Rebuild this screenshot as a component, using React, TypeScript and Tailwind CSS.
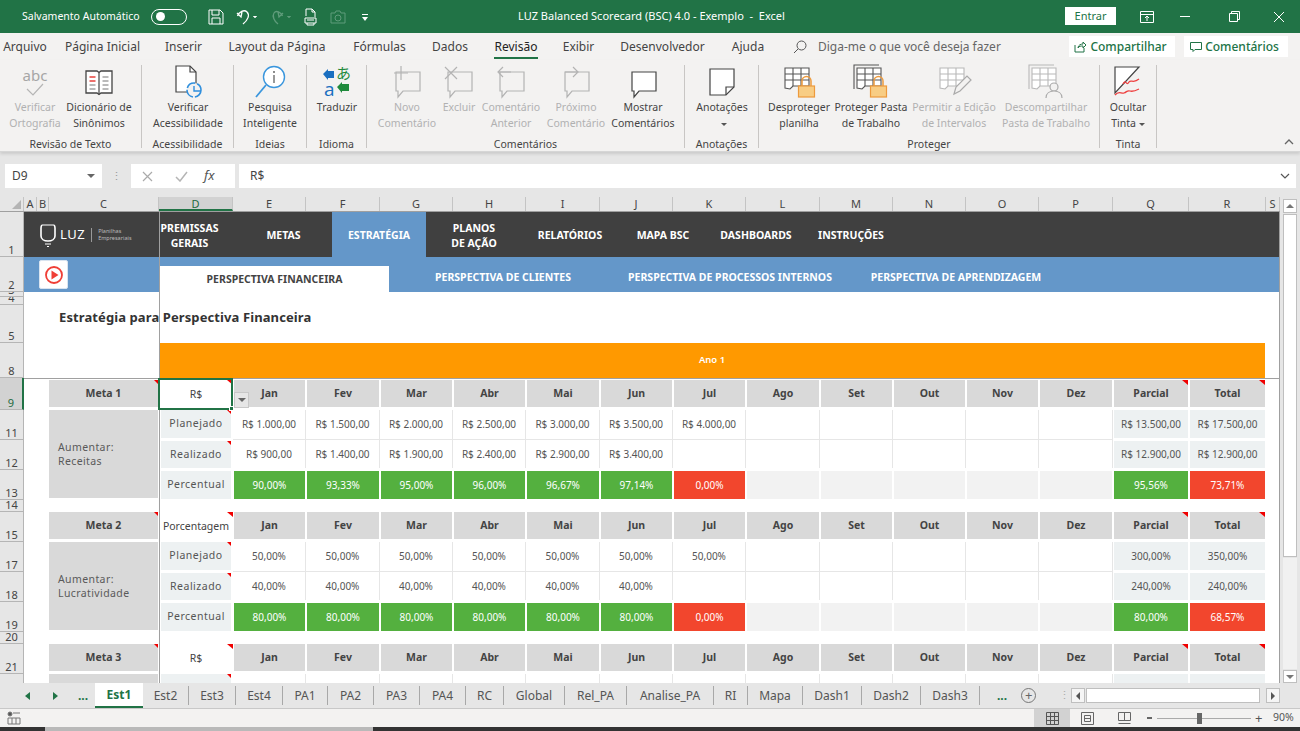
import React from "react";

const GRID = "grid grid-cols-[25px_110px_74px_73px_74px_73px_73px_74px_73px_73px_74px_73px_73px_73px_74px_76px_77px_14px] auto-rows-[30px]";
const MONTHS = ["Jan", "Fev", "Mar", "Abr", "Mai", "Jun", "Jul", "Ago", "Set", "Out", "Nov", "Dez"];

const Tri = ({ big }: { big?: boolean }) => (
  <i className={(big ? "w-[6px] h-[5px]" : "w-[4px] h-[4px]") + " absolute top-0 right-0 bg-[#f00000] [clip-path:polygon(0_0,100%_0,100%_100%)]"} />
);

/* ---------- icons ---------- */
const Sv = ({ w = 32, h = 32, vb = "0 0 32 32", children }: { w?: number; h?: number; vb?: string; children: React.ReactNode }) => (
  <svg width={w} height={h} viewBox={vb} fill="none">{children}</svg>
);
const Abc = () => (
  <div className="flex flex-col items-center text-[#a6a6a6]">
    <span className="text-[15px] leading-[15px]">abc</span>
    <svg width="20" height="14" viewBox="0 0 20 14" fill="none"><path d="M2 6l6 6L18 1" stroke="#b5b5b5" strokeWidth="1.2" /></svg>
  </div>
);
const Book = () => (
  <Sv>
    <path d="M3 5h11l2 1.500L18 5h11v22H18l-2 1.500L14 27H3z" fill="#fff" stroke="#444" strokeWidth="1.3" />
    <path d="M16 6.500v22" stroke="#444" strokeWidth="1.200" />
    <path d="M6.500 11h6M6.500 15h6" stroke="#e8413c" strokeWidth="1.300" />
    <path d="M6.500 19h6M6.500 23h6M19.500 11h6M19.500 15h6M19.500 19h6M19.500 23h6" stroke="#777" strokeWidth="1.100" />
  </Sv>
);
const Access = () => (
  <Sv w={34} h={36} vb="0 0 34 36">
    <path d="M5 2h14l6 6v20H5z" fill="#fff" stroke="#444" strokeWidth="1.200" />
    <path d="M19 2v6h6" stroke="#444" strokeWidth="1.200" />
    <circle cx="23" cy="26" r="7" fill="#f3f2f1" stroke="#2f8fdd" strokeWidth="1.600" strokeDasharray="10 2" />
    <path d="M23 22v5h7" stroke="#2f8fdd" strokeWidth="1.400" />
  </Sv>
);
const Smart = () => (
  <Sv w={34} h={36} vb="0 0 34 36">
    <circle cx="21" cy="13" r="10.500" fill="#fff" stroke="#3a96dd" strokeWidth="1.400" />
    <path d="M13 21L3 33" stroke="#3a96dd" strokeWidth="1.800" />
    <path d="M21 11v8" stroke="#555" strokeWidth="1.200" />
    <circle cx="21" cy="8" r=".9" fill="#555" />
  </Sv>
);
const Translate = () => (
  <Sv w={30} h={34} vb="0 0 30 34">
    <path d="M1 9l5-5v2h6v7H6v2z" fill="#1a6fc0" />
    <path d="M28 23l-5 5v-2h-7v-7h7v-2z" fill="#1f8a3c" transform="rotate(180 21.500 22.500)" />
    <text x="14" y="14" fontSize="15" fill="#1f8a3c" fontFamily="'Noto Sans CJK JP',sans-serif">あ</text>
    <text x="2" y="31" fontSize="19" fill="#1a6fc0" fontFamily="'Open Sans',sans-serif">a</text>
    <path d="M3 33h10" stroke="#1a6fc0" strokeWidth="0" />
  </Sv>
);
const Bubble = ({ kind }: { kind: string }) => {
  const c = kind === "show" ? "#444" : "#b3b3b3";
  return (
    <Sv w={32} h={34} vb="0 0 32 34">
      <path d="M5 7h24v19H12l-5 6v-6H5z" fill={kind === "show" ? "#fff" : "#f3f2f1"} stroke={c} strokeWidth="1.200" />
      {kind === "new" && <path d="M10 1v14M3 8h14" stroke={c} strokeWidth="1.200" />}
      {kind === "del" && <path d="M2 2l12 12M14 2L2 14" stroke={c} strokeWidth="1.200" />}
      {kind === "prev" && <path d="M16 7H4m4-5L3 7l5 5" stroke={c} strokeWidth="1.200" />}
      {kind === "next" && <path d="M5 7h12m-4-5 5 5-5 5" stroke={c} strokeWidth="1.200" />}
    </Sv>
  );
};
const Note = () => (
  <Sv>
    <path d="M4 3h24v18l-8 8H4z" fill="#fff" stroke="#444" strokeWidth="1.200" />
    <path d="M28 21h-8v8" stroke="#444" strokeWidth="1.200" />
  </Sv>
);
const Sheet = ({ c, stack }: { c: string; stack?: boolean }) => (
  <g stroke={c} strokeWidth="1.100" fill="none">
    {stack && <path d="M1 25V1h25" />}
    <path d="M4 4h24v18H12l-3 3-5-1z" fill="#fff" />
    <path d="M4 10h24M4 16h24M12 4v18M20 4v18" />
  </g>
);
const Lock = () => (
  <g>
    <path d="M21 22v-5a4.500 4.500 0 0 1 9 0v5" stroke="#ed9a3c" strokeWidth="1.500" fill="none" />
    <rect x="17.500" y="22" width="16" height="11" fill="#f8cd84" stroke="#ed9a3c" strokeWidth="1.200" />
  </g>
);
const Unprotect = () => (<Sv w={36} h={36} vb="0 0 36 36"><Sheet c="#555" /><Lock /></Sv>);
const Protect = () => (<Sv w={36} h={36} vb="0 0 36 36"><Sheet c="#555" stack /><Lock /></Sv>);
const Permit = () => (
  <Sv w={36} h={36} vb="0 0 36 36">
    <Sheet c="#b8b8b8" />
    <path d="M18 30l2-7 11-11 4 4-11 11z" fill="#f3f2f1" stroke="#aaa" strokeWidth="1.200" />
  </Sv>
);
const Unshare = () => (
  <Sv w={36} h={36} vb="0 0 36 36">
    <Sheet c="#b8b8b8" stack />
    <circle cx="26" cy="23" r="4" fill="#f3f2f1" stroke="#aaa" strokeWidth="1.200" />
    <path d="M18 34c0-5 4-7 8-7s8 2 8 7" fill="#f3f2f1" stroke="#aaa" strokeWidth="1.200" />
  </Sv>
);
const Ink = () => (
  <Sv w={32} h={34} vb="0 0 32 34">
    <path d="M3 2h24L3 28z" fill="#fff" stroke="#444" strokeWidth="1.200" />
    <path d="M11 19c3-6 3 3 6-2 2-3 4 2 10-3" stroke="#ee4040" strokeWidth="1.300" />
    <path d="M3 30c4-5 6-1 9-2s3-3 6-2 5 0 9-2" stroke="#ee4040" strokeWidth="1.300" />
  </Sv>
);

/* ---------- ribbon ---------- */
type Btn = { i: React.ReactNode; t: string[]; w: string; off?: boolean };
type Group = { label: string; w: string; pl: string; btns: Btn[] };
const GROUPS: Group[] = [
  { label: "Revisão de Texto", w: "w-[142px]", pl: "pl-[6px]", btns: [
    { i: <Abc />, t: ["Verificar", "Ortografia"], w: "w-[58px]", off: true },
    { i: <Book />, t: ["Dicionário de", "Sinônimos"], w: "w-[70px]" },
  ] },
  { label: "Acessibilidade", w: "w-[92px]", pl: "pl-[8px]", btns: [{ i: <Access />, t: ["Verificar", "Acessibilidade"], w: "w-[76px]" }] },
  { label: "Ideias", w: "w-[73px]", pl: "pl-[7px]", btns: [{ i: <Smart />, t: ["Pesquisa", "Inteligente"], w: "w-[58px]" }] },
  { label: "Idioma", w: "w-[60px]", pl: "pl-[7px]", btns: [{ i: <Translate />, t: ["Traduzir"], w: "w-[46px]" }] },
  { label: "Comentários", w: "w-[318px]", pl: "pl-[7px]", btns: [
    { i: <Bubble kind="new" />, t: ["Novo", "Comentário"], w: "w-[66px]", off: true },
    { i: <Bubble kind="del" />, t: ["Excluir"], w: "w-[38px]", off: true },
    { i: <Bubble kind="prev" />, t: ["Comentário", "Anterior"], w: "w-[66px]", off: true },
    { i: <Bubble kind="next" />, t: ["Próximo", "Comentário"], w: "w-[64px]", off: true },
    { i: <Bubble kind="show" />, t: ["Mostrar", "Comentários"], w: "w-[70px]" },
  ] },
  { label: "Anotações", w: "w-[74px]", pl: "pl-[7px]", btns: [{ i: <Note />, t: ["Anotações", "▾"], w: "w-[60px]" }] },
  { label: "Proteger", w: "w-[341px]", pl: "pl-[6px]", btns: [
    { i: <Unprotect />, t: ["Desproteger", "planilha"], w: "w-[68px]" },
    { i: <Protect />, t: ["Proteger Pasta", "de Trabalho"], w: "w-[76px]" },
    { i: <Permit />, t: ["Permitir a Edição", "de Intervalos"], w: "w-[90px]", off: true },
    { i: <Unshare />, t: ["Descompartilhar", "Pasta de Trabalho"], w: "w-[94px]", off: true },
  ] },
  { label: "Tinta", w: "w-[57px]", pl: "pl-[4px]", btns: [{ i: <Ink />, t: ["Ocultar", "Tinta ▾"], w: "w-[48px]" }] },
];
const TABS: [string, string][] = [
  ["Arquivo", "w-[50px]"], ["Página Inicial", "w-[105px]"], ["Inserir", "w-[57px]"], ["Layout da Página", "w-[130px]"],
  ["Fórmulas", "w-[75px]"], ["Dados", "w-[66px]"], ["Revisão", "w-[66px]"], ["Exibir", "w-[59px]"],
  ["Desenvolvedor", "w-[109px]"], ["Ajuda", "w-[62px]"],
];

const TitleBar = () => (
  <div className="h-[33px] bg-[#217346] text-white flex items-center text-[10.500px] relative">
    <span className="ml-[22px] w-[129px] whitespace-nowrap">Salvamento Automático</span>
    <div className="w-[36px] h-[16px] rounded-full border border-white flex items-center pl-[4px]"><i className="w-[9px] h-[9px] rounded-full bg-white" /></div>
    <div className="ml-[21px] w-[16px] h-[16px]">
      <svg width="16" height="16" viewBox="0 0 16 16" fill="none" stroke="#fff" strokeWidth="1"><path d="M1 1h11l3 3v11H1z" /><path d="M4 1v5h7V1M4 15v-6h8v6" /></svg>
    </div>
    <svg className="ml-[12px]" width="22" height="16" viewBox="0 0 22 16" fill="none" stroke="#fff" strokeWidth="1.300"><path d="M1 4l4 4 1-5M1.500 7C3 3 8 0 11 3c3 3 1 8-4 12" /><path d="M17 7l2 2 2-2" fill="#fff" strokeWidth=".5" /></svg>
    <svg className="ml-[12px]" width="22" height="16" viewBox="0 0 22 16" fill="none" stroke="#5f9c7b" strokeWidth="1.300"><path d="M11 4L7 8 6 3M10.500 7C9 3 4 1 2 4c-2 3 0 8 4 11" transform="translate(2 0)" /><path d="M17 7l2 2 2-2" fill="#5f9c7b" strokeWidth=".5" /></svg>
    <svg className="ml-[10px]" width="18" height="18" viewBox="0 0 18 18" fill="none" stroke="#fff" strokeWidth="1"><path d="M4 8V1h6l3 3v5M10 1v3h3M3 10h11v5H3zM5 15v2h7v-2M5 12h7" /></svg>
    <svg className="ml-[10px]" width="16" height="16" viewBox="0 0 16 16" fill="none" stroke="#5f9c7b" strokeWidth="1"><path d="M1 4h4l1-2h4l1 2h4v10H1z" /><circle cx="8" cy="9" r="3" /></svg>
    <svg className="ml-[14px]" width="10" height="10" viewBox="0 0 10 10"><path d="M2 2h6v1H2zM2 5h6L5 9z" fill="#fff" /></svg>
    <span className="absolute left-[518px] whitespace-pre text-[11px]">LUZ Balanced Scorecard (BSC) 4.0 - Exemplo  -  Excel</span>
    <div className="absolute left-[1065px] top-[7px] w-[51px] h-[18px] bg-white text-[#217346] flex items-center justify-center text-[11px]">Entrar</div>
    <svg className="absolute left-[1140px]" width="14" height="12" viewBox="0 0 14 12" fill="none" stroke="#fff"><path d="M.500 .500h13v11H.500zM.500 3.500h13M7 10V5M5 7l2-2 2 2" /></svg>
    <i className="absolute left-[1180px] w-[10px] h-px bg-white" />
    <svg className="absolute left-[1229px]" width="11" height="11" viewBox="0 0 11 11" fill="none" stroke="#fff"><path d="M.500 2.500h8v8h-8zM2.500 2.500v-2h8v8h-2" /></svg>
    <svg className="absolute left-[1274px]" width="10" height="10" viewBox="0 0 10 10" stroke="#fff"><path d="M0 0l10 10M10 0L0 10" /></svg>
  </div>
);

const TabRow = () => (
  <div className="h-[27px] bg-[#f3f2f1] flex items-center text-[12px] text-[#444] relative pt-[1px]">
    {TABS.map(([t, w]) => (
      <div key={t} className={w + " text-center relative h-full flex items-center justify-center"}>
        {t === "Revisão" ? <span className="text-[#222]">{t}</span> : t}
        {t === "Revisão" && <i className="absolute left-[11px] right-[11px] bottom-[1px] h-[2px] bg-[#217346]" />}
      </div>
    ))}
    <svg className="ml-[14px]" width="14" height="14" viewBox="0 0 14 14" fill="none" stroke="#555"><circle cx="8.500" cy="5.500" r="4.500" /><path d="M5 9l-4 4" /></svg>
    <span className="ml-[11px] text-[#666]">Diga-me o que você deseja fazer</span>
    <div className="absolute left-[1069px] top-[3px] w-[106px] h-[21px] bg-white flex items-center justify-center gap-[3px] text-[#217346] font-medium pr-[3px]">
      <svg width="13" height="13" viewBox="0 0 13 13" fill="none" stroke="#217346"><path d="M1 5v7h9V8M4 8c0-3 3-4 5-4V2l3 3-3 3V6C7 6 5 6 4 8z" /></svg>
      Compartilhar
    </div>
    <div className="absolute left-[1184px] top-[3px] w-[104px] h-[21px] bg-white flex items-center justify-center gap-[3px] text-[#217346] font-medium pr-[3px]">
      <svg width="12" height="12" viewBox="0 0 12 12" fill="none" stroke="#217346"><path d="M.500 1.500h11v7H5l-2 2v-2H.500z" /></svg>
      Comentários
    </div>
  </div>
);

const Caret = () => <i className="inline-block align-middle ml-[3px] w-0 h-0 border-x-[3px] border-x-transparent border-t-[3px] border-t-[#555]" />;

const Ribbon = () => (
  <div className="h-[92px] bg-[#f3f2f1] flex pt-[5px] text-[10.500px] leading-[16px] text-[#444] relative border-b border-[#d6d6d6] shadow-[0_2px_3px_rgba(0,0,0,0.12)]">
    {GROUPS.map((g) => (
      <div key={g.label} className={g.w + " h-[83px] flex flex-col border-r border-[#c8c6c4]"}>
        <div className={g.pl + " h-[72px] flex"}>
          {g.btns.map((b) => (
            <div key={b.t[0]} className={b.w + " flex flex-col items-center shrink-0 whitespace-nowrap " + (b.off ? "text-[#b1b1b1]" : "")}>
              <div className="h-[34px] flex items-center justify-center">{b.i}</div>
              {b.t.map((l) => (
                <span key={l}>{l.replace("▾", "").trim()}{l.includes("▾") && <Caret />}</span>
              ))}
            </div>
          ))}
        </div>
        <div className="text-center leading-[14px] h-[11px]">{g.label}</div>
      </div>
    ))}
    <svg className="absolute right-[6px] bottom-[6px]" width="10" height="7" viewBox="0 0 10 7" fill="none" stroke="#666" strokeWidth="1.300"><path d="M1 6l4-4 4 4" /></svg>
  </div>
);

const FormulaBar = () => (
  <div className="h-[45px] bg-[#e6e6e6] flex pt-[12px] text-[12px] text-[#444]">
    <div className="ml-[5px] w-[97px] h-[24px] bg-white flex items-center justify-between px-[7px]">
      D9 <i className="w-0 h-0 border-x-[4px] border-x-transparent border-t-[4px] border-t-[#666]" />
    </div>
    <div className="w-[29px] h-[24px] flex items-center justify-center text-[#999] text-[11px]">⋮</div>
    <div className="w-[104px] h-[24px] bg-white flex items-center">
      <svg className="ml-[11px]" width="11" height="11" viewBox="0 0 11 11" stroke="#aaa" strokeWidth="1.200"><path d="M1 1l9 9M10 1L1 10" /></svg>
      <svg className="ml-[22px]" width="13" height="11" viewBox="0 0 13 11" fill="none" stroke="#b5b5b5" strokeWidth="1.500"><path d="M1 6l4 4 7-9" /></svg>
      <span className="ml-[16px] italic text-[#555] font-['Liberation_Serif',serif] text-[13px]">fx</span>
    </div>
    <div className="ml-[4px] w-[1057px] h-[24px] bg-white flex items-center justify-between pl-[11px] pr-[6px]">
      R$
      <svg width="10" height="6" viewBox="0 0 10 6" fill="none" stroke="#555" strokeWidth="1.200"><path d="M1 1l4 4 4-4" /></svg>
    </div>
  </div>
);

/* ---------- sheet ---------- */
const COLS = ["A", "B", "C", "D", "E", "F", "G", "H", "I", "J", "K", "L", "M", "N", "O", "P", "Q", "R", "S"];
const ColHeader = () => (
  <div className="flex h-[15px] bg-[#e6e6e6] border-b border-[#9f9f9f]">
    <div className="w-[24px] relative border-r border-[#c4c4c4]">
      <i className="absolute right-[2px] bottom-[2px] w-[9px] h-[9px] bg-[#b4b4b4] [clip-path:polygon(100%_0,100%_100%,0_100%)]" />
    </div>
    <div className="flex-1 grid grid-cols-[13px_12px_110px_74px_73px_74px_73px_73px_74px_73px_73px_74px_73px_73px_73px_74px_76px_77px_14px] text-[11px] text-[#444] leading-[14px]">
      {COLS.map((c) => (
        <div key={c} className={"text-center overflow-hidden border-r border-[#c4c4c4] " + (c === "D" ? "bg-[#d2d2d2] text-[#1f6b3f] border-b-2 border-b-[#217346]" : "")}>{c}</div>
      ))}
    </div>
  </div>
);

const ROWS: [string, string, boolean?][] = [
  ["1", "h-[45px]"], ["2", "h-[35px]"], ["3", "h-[5px]"], ["4", "h-[8px]"], ["5", "h-[38px]"], ["8", "h-[35px]"],
  ["9", "h-[32px]", true], ["11", "h-[30px]"], ["12", "h-[30px]"], ["13", "h-[30px]"], ["14", "h-[12px]"], ["15", "h-[30px]"],
  ["17", "h-[30px]"], ["18", "h-[30px]"], ["19", "h-[30px]"], ["20", "h-[12px]"], ["21", "h-[30px]"], ["22", "h-[30px]"],
];
const RowHeader = () => (
  <div className="w-[24px] shrink-0 text-[11px] text-[#444] bg-[#e6e6e6]">
    {ROWS.map(([n, h, sel]) => (
      <div key={n} className={h + " overflow-hidden flex items-end justify-center leading-[13px] border-b border-[#b5b5b5] border-r " + (sel ? "bg-[#d2d2d2] text-[#1f6b3f] border-r-2 border-r-[#217346]" : "border-r-[#b5b5b5]")}>{n}</div>
    ))}
  </div>
);

const Head = ({ t, tri }: { t: string; tri?: boolean }) => (
  <div className="relative mx-[1px] mb-[3px] bg-[#d9d9d9] flex items-center justify-center font-bold text-[#444] text-[10.500px]">
    {t}{tri && <Tri big />}
  </div>
);
const Label = ({ t, cls }: { t: string; cls: string }) => (
  <div className={"relative col-start-3 ml-[2px] mr-[2px] bg-[#edf1f2] flex items-center justify-center text-[#555] text-[10.500px] tracking-[0.5px] " + cls}>
    {t}{cls.includes("mb-[2px]") && <Tri />}
  </div>
);

type BlockData = { meta: string; unit: string; goal: string[]; plan: string[]; real: string[]; pct: string[]; planT: string[]; realT: string[]; pctT: string[]; cls?: string };

const Block = ({ d }: { d: BlockData }) => (
  <div className={GRID + " " + (d.cls || "")}>
    <div />
    <div className="relative mr-[1px] mb-[3px] bg-[#d9d9d9] flex items-center justify-center font-bold text-[#444] text-[10.500px]">{d.meta}<Tri /></div>
    <div className="relative flex items-center justify-center bg-white text-[#444] text-[10.500px]">{d.unit}<Tri big /></div>
    {MONTHS.map((m) => <Head key={m} t={m} />)}
    <Head t="Parcial" tri /><Head t="Total" tri />
    <div />

    {/* goal */}
    <div className="col-start-2 row-start-2 row-span-3 mr-[1px] mb-[2px] bg-[#d9d9d9] flex items-center pl-[9px] text-[#595959] text-[10.500px] leading-[14px] tracking-[0.4px]">
      <div>{d.goal.map((g) => <div key={g}>{g}</div>)}</div>
    </div>

    {/* planned */}
    <div className="col-start-1 row-start-2" />
    <Label t="Planejado" cls="row-start-2 mb-[2px]" />
    {MONTHS.map((m, i) => (
      <div key={m} className="row-start-2 border-r border-b border-[#e6e6e6] flex items-center justify-center text-[#555] text-[10px]">{d.plan[i] || ""}</div>
    ))}
    {d.planT.map((v, i) => <div key={i} className="row-start-2 mx-[1px] mb-[2px] bg-[#edf1f2] flex items-center justify-center text-[#555] text-[10px]">{v}</div>)}

    {/* done */}
    <div className="col-start-1 row-start-3" />
    <Label t="Realizado" cls="row-start-3 mt-[1px] mb-[2px]" />
    {MONTHS.map((m, i) => (
      <div key={m} className="row-start-3 mb-[2px] border-r border-[#e6e6e6] flex items-center justify-center text-[#555] text-[10px]">{d.real[i] || ""}</div>
    ))}
    {d.realT.map((v, i) => <div key={i} className="row-start-3 mx-[1px] mt-[1px] mb-[2px] bg-[#edf1f2] flex items-center justify-center text-[#555] text-[10px]">{v}</div>)}

    {/* percent */}
    <div className="col-start-1 row-start-4" />
    <Label t="Percentual" cls="row-start-4 my-[1px]" />
    {MONTHS.map((m, i) => {
      const v = d.pct[i];
      const bg = !v ? "bg-[#f2f2f2]" : v === "0,00%" ? "bg-[#f2462d]" : "bg-[#54b03f]";
      return <div key={m} className={"row-start-4 mx-[1px] my-[1px] flex items-center justify-center text-white text-[10px] " + bg}>{v || ""}</div>;
    })}
    {d.pctT.map((v, i) => (
      <div key={i} className={"row-start-4 mx-[1px] my-[1px] flex items-center justify-center text-white text-[10px] " + (i === 0 ? "bg-[#54b03f]" : "bg-[#f2462d]")}>{v}</div>
    ))}
  </div>
);

const B1: BlockData = {
  meta: "Meta 1", unit: "R$", goal: ["Aumentar:", "Receitas"], cls: "pt-[2px]",
  plan: ["R$ 1.000,00", "R$ 1.500,00", "R$ 2.000,00", "R$ 2.500,00", "R$ 3.000,00", "R$ 3.500,00", "R$ 4.000,00"],
  real: ["R$ 900,00", "R$ 1.400,00", "R$ 1.900,00", "R$ 2.400,00", "R$ 2.900,00", "R$ 3.400,00"],
  pct: ["90,00%", "93,33%", "95,00%", "96,00%", "96,67%", "97,14%", "0,00%"],
  planT: ["R$ 13.500,00", "R$ 17.500,00"], realT: ["R$ 12.900,00", "R$ 12.900,00"], pctT: ["95,56%", "73,71%"],
};
const B2: BlockData = {
  meta: "Meta 2", unit: "Porcentagem", goal: ["Aumentar:", "Lucratividade"], cls: "mt-[12px]",
  plan: ["50,00%", "50,00%", "50,00%", "50,00%", "50,00%", "50,00%", "50,00%"],
  real: ["40,00%", "40,00%", "40,00%", "40,00%", "40,00%", "40,00%"],
  pct: ["80,00%", "80,00%", "80,00%", "80,00%", "80,00%", "80,00%", "0,00%"],
  planT: ["300,00%", "350,00%"], realT: ["240,00%", "240,00%"], pctT: ["80,00%", "68,57%"],
};
const B3: BlockData = {
  meta: "Meta 3", unit: "R$", goal: [""], cls: "mt-[12px]",
  plan: [], real: [], pct: [], planT: ["", ""], realT: ["", ""], pctT: ["", ""],
};

const NAV: [string[], string][] = [
  [["PREMISSAS", "GERAIS"], "w-[61px]"], [["METAS"], "w-[112px] pl-[15px]"], [["ESTRATÉGIA"], "w-[94px] bg-[#6497c9]"],
  [["PLANOS", "DE AÇÃO"], "w-[96px]"], [["RELATÓRIOS"], "w-[96px]"], [["MAPA BSC"], "w-[90px]"], [["DASHBOARDS"], "w-[96px]"], [["INSTRUÇÕES"], "w-[94px]"],
];
const SUB: [string, string][] = [["PERSPECTIVA DE CLIENTES", "w-[228px]"], ["PERSPECTIVA DE PROCESSOS INTERNOS", "w-[226px]"], ["PERSPECTIVA DE APRENDIZAGEM", "w-[226px]"]];

const SheetBody = () => (
  <div className="flex-1 min-w-0 bg-white">
    <div className="h-[45px] bg-[#404040] flex text-white font-bold text-[10.500px] leading-[15px]">
      <div className="w-[135px] flex items-center pl-[15px] gap-[3px]">
        <svg width="18" height="26" viewBox="0 0 18 26" fill="none" stroke="#fff" strokeWidth="1.600">
          <path d="M3 3c-1 1-1 2-1 3v8c0 3 3 5 7 5s7-2 7-5V6c0-1 0-2-1-3" />
          <path d="M3 3h12M6 22h6M8 24.500h2" strokeWidth="1.200" />
        </svg>
        <span className="text-[13px] font-normal tracking-[0.5px]">LUZ</span>
        <i className="w-px h-[14px] bg-[#999] mx-[3px]" />
        <span className="text-[5.500px] leading-[7px] font-normal text-[#bbb]">Planilhas<br />Empresariais</span>
      </div>
      {NAV.map(([t, w]) => (
        <div key={t[0]} className={w + " shrink-0 flex flex-col items-center justify-center text-center whitespace-nowrap pt-[2px]"}>
          {t.map((l) => <span key={l}>{l}</span>)}
        </div>
      ))}
    </div>
    <div className="h-[35px] bg-[#6497c9] flex text-white font-bold text-[10.500px]">
      <div className="w-[136px] pl-[15px] pt-[3px]">
        <div className="w-[29px] h-[29px] bg-white rounded-[2px] border border-[#d9e4f0] flex items-center justify-center">
          <svg width="20" height="20" viewBox="0 0 20 20" fill="none"><circle cx="10" cy="10" r="8" stroke="#ef3e36" strokeWidth="1.800" /><path d="M7.500 5.500l7 4.500-7 4.500z" fill="#ef3e36" /></svg>
        </div>
      </div>
      <div className="self-end h-[26px] w-[229px] bg-white text-[#444] flex items-center justify-center pt-[2px]">PERSPECTIVA FINANCEIRA</div>
      {SUB.map(([t, w]) => <div key={t} className={w + " self-end h-[26px] flex items-center justify-center pb-[2px]"}>{t}</div>)}
    </div>
    <div className="h-[51px] flex items-center pl-[35px] font-bold text-[13px] text-[#333] tracking-[0.1px]">Estratégia para Perspectiva Financeira</div>
    <div className="h-[35px] pl-[135px] pr-[14px]">
      <div className="h-full bg-[#ff9900] text-white font-semibold text-[9.500px] flex items-center justify-center">Ano 1</div>
    </div>
    <Block d={B1} />
    <Block d={B2} />
    <Block d={B3} />
  </div>
);

const VScroll = () => (
  <div className="w-[20px] shrink-0 bg-[#e6e6e6] pl-[3px] pr-[3px] pt-[2px] flex flex-col gap-[1px] relative">
    <div className="h-[14px] bg-white border border-[#bfbfbf] flex items-center justify-center"><i className="w-0 h-0 border-x-[4px] border-x-transparent border-b-[4px] border-b-[#777]" /></div>
    <div className="h-[344px] bg-white border border-[#bfbfbf]" />
    <div className="h-[111px] bg-[#f1f1f1]" />
    <div className="h-[13px] bg-white border border-[#bfbfbf] flex items-center justify-center"><i className="w-0 h-0 border-x-[4px] border-x-transparent border-t-[4px] border-t-[#777]" /></div>
  </div>
);

const Sheet_ = () => (
  <div className="relative h-[486px] flex overflow-hidden bg-[#e6e6e6]">
    <div className="flex-1 min-w-0">
      <ColHeader />
      <div className="flex h-[471px] overflow-hidden border-r border-[#9f9f9f]">
        <RowHeader />
        <SheetBody />
      </div>
    </div>
    <VScroll />
    {/* frozen-pane lines */}
    <i className="absolute left-[159px] top-[15px] bottom-0 w-px bg-[#a0a0a0]" />
    <i className="absolute left-[24px] right-[20px] top-[181px] h-px bg-[#a0a0a0]" />
    {/* selected cell */}
    <div className="absolute left-[158px] top-[181px] w-[75px] h-[32px] border-2 border-[#217346]" >
      <i className="absolute -right-[3px] -bottom-[3px] w-[5px] h-[5px] bg-[#217346] border border-white" />
    </div>
    <div className="absolute left-[234px] top-[195px] w-[15px] h-[16px] bg-[#e6e6e6] border border-[#c8c8c8] flex items-center justify-center">
      <i className="w-0 h-0 border-x-[4px] border-x-transparent border-t-[4px] border-t-[#666]" />
    </div>
  </div>
);

const SHEETS: [string, string][] = [
  ["Est2", "w-[46px]"], ["Est3", "w-[47px]"], ["Est4", "w-[47px]"], ["PA1", "w-[45px]"], ["PA2", "w-[46px]"], ["PA3", "w-[46px]"], ["PA4", "w-[46px]"],
  ["RC", "w-[38px]"], ["Global", "w-[61px]"], ["Rel_PA", "w-[62px]"], ["Analise_PA", "w-[87px]"], ["RI", "w-[34px]"], ["Mapa", "w-[55px]"],
  ["Dash1", "w-[59px]"], ["Dash2", "w-[59px]"], ["Dash3", "w-[59px]"],
];
const SheetTabs = () => (
  <div className="h-[26px] bg-[#e6e6e6] flex items-center text-[12px] text-[#555] border-b border-[#c8c8c8] relative">
    <div className="w-[95px] flex items-center text-[#217346] font-bold shrink-0 h-full">
      <i className="ml-[25px] w-0 h-0 border-y-[4px] border-y-transparent border-r-[5px] border-r-[#217346]" />
      <i className="ml-[23px] w-0 h-0 border-y-[4px] border-y-transparent border-l-[5px] border-l-[#217346]" />
      <span className="ml-[20px]">...</span>
    </div>
    <div className="w-[48px] h-[25px] bg-white border-b-2 border-[#217346] text-[#217346] font-bold flex items-center justify-center shrink-0">Est1</div>
    {SHEETS.map(([t, w]) => (
      <div key={t} className={w + " shrink-0 h-[19px] flex items-center justify-center border-r border-[#a8a8a8]"}>{t}</div>
    ))}
    <span className="ml-[17px] text-[#217346] font-bold">...</span>
    <div className="ml-[14px] w-[15px] h-[15px] rounded-full border border-[#777] flex items-center justify-center text-[#666] leading-none text-[13px]">+</div>
    <span className="ml-[23px] text-[#aaa] text-[11px]">⋮</span>
    <div className="absolute left-[1071px] top-[5px] w-[209px] h-[15px] flex gap-[1px]">
      <div className="w-[14px] bg-[#f5f5f5] border border-[#bfbfbf] flex items-center justify-center"><i className="w-0 h-0 border-y-[4px] border-y-transparent border-r-[4px] border-r-[#555]" /></div>
      <div className="flex-1 bg-white border border-[#bfbfbf]" />
      <i className="w-[4px]" />
      <div className="w-[14px] bg-[#f5f5f5] border border-[#bfbfbf] flex items-center justify-center"><i className="w-0 h-0 border-y-[4px] border-y-transparent border-l-[4px] border-l-[#555]" /></div>
    </div>
  </div>
);

const StatusBar = () => (
  <div className="h-[18px] bg-[#f3f2f1] flex items-center relative text-[10.500px] text-[#555]">
    <svg className="ml-[7px]" width="14" height="14" viewBox="0 0 14 14" fill="none" stroke="#777"><circle cx="3" cy="3" r="2" fill="#555" /><path d="M6 2h7M1 7h12v6H1zM5 7v6M9 7v6" /></svg>
    <div className="absolute left-[1034px] top-0 w-[36px] h-full bg-[#d2d2d2] flex items-center justify-center">
      <svg width="13" height="13" viewBox="0 0 13 13" fill="none" stroke="#555"><path d="M.500 .500h12v12H.500zM4.500 .500v12M8.500 .500v12M.500 4.500h12M.500 8.500h12" /></svg>
    </div>
    <svg className="absolute left-[1081px]" width="13" height="13" viewBox="0 0 13 13" fill="none" stroke="#666"><path d="M.500 .500h12v12H.500zM3.500 3.500h6v6h-6zM3.500 6.500h6" /></svg>
    <svg className="absolute left-[1118px]" width="13" height="13" viewBox="0 0 13 13" fill="none" stroke="#666"><path d="M.500 .500h12v8H.500zM6.500 .500v8M.500 11.500h12" /></svg>
    <i className="absolute left-[1147px] w-[5px] h-[2px] bg-[#666]" />
    <i className="absolute left-[1157px] w-[94px] h-px bg-[#aaa]" />
    <i className="absolute left-[1197px] w-[5px] h-[11px] bg-[#666]" />
    <span className="absolute left-[1255px] text-[#555] text-[13px] leading-none">+</span>
    <span className="absolute left-[1273px]">90%</span>
  </div>
);

export default function App() {
  return (
    <div className="w-[1300px] h-[731px] overflow-hidden bg-[#e6e6e6] font-['Open_Sans','Noto_Sans',sans-serif]">
      <TitleBar />
      <TabRow />
      <Ribbon />
      <FormulaBar />
      <Sheet_ />
      <SheetTabs />
      <StatusBar />
      <div className="h-[4px] flex">
        <div className="w-[45px] bg-[#333]" />
        <div className="w-[328px] bg-[#b9b9b9]" />
        <div className="flex-1 bg-[#333]" />
      </div>
    </div>
  );
}
